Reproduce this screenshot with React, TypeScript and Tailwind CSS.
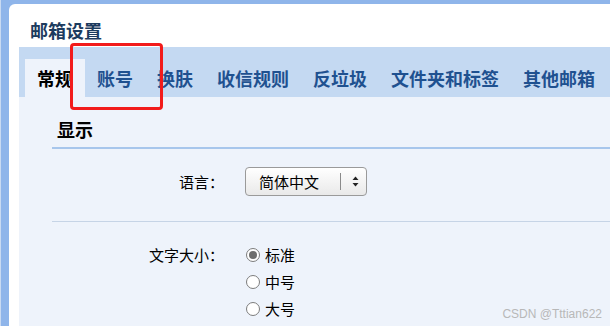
import React from "react";

const tabs = ["常规", "账号", "换肤", "收信规则", "反垃圾", "文件夹和标签", "其他邮箱"];

function Radio({ label, checked }: { label: string; checked?: boolean }) {
  return (
    <label className="flex h-[27px] items-center">
      <span className="flex h-[14px] w-[14px] items-center justify-center rounded-full border border-[#7c7c7c] bg-white">
        {checked && <span className="h-[8px] w-[8px] rounded-full bg-[#6e6e6e]" />}
      </span>
      <span className="ml-[5px] text-[15px] leading-[20px] text-black">{label}</span>
    </label>
  );
}

export default function App() {
  return (
    <div className="relative h-[326px] w-[610px] overflow-hidden border-l border-[#c9daf2] bg-[#8fb5ea] pl-[8px] pt-[4px] font-['Noto_Sans_CJK_SC',sans-serif]">
      <div className="flex h-full flex-col rounded-tl-[6px] bg-white pl-[10px]">
        {/* title */}
        <h1 className="ml-[11px] h-[43px] pt-[14px] text-[18px] font-bold leading-[24px] text-[#1c3b5e]">
          邮箱设置
        </h1>

        {/* tab bar */}
        <div className="flex h-[50px] items-end bg-[#c4d9f2] pl-[6px]">
          {tabs.map((t, i) => (
            <div
              key={t}
              className={`flex h-[38px] items-center px-3 text-[18px] font-bold leading-[24px] ${
                i === 0 ? "bg-[#eef3fb] text-black" : "text-[#1f5190]"
              }`}
            >
              {t}
            </div>
          ))}
        </div>

        {/* content */}
        <div className="flex-1 bg-[#eef3fb] pl-[33px]">
          <h2 className="border-b-2 border-[#a7c6ec] pb-[6px] pl-[5px] pt-[20px] text-[18px] font-bold leading-[24px] text-black">
            显示
          </h2>

          <div className="mt-[18px] flex h-[29px] items-center">
            <div className="w-[172px] text-right text-[15px] leading-[20px] text-black">语言：</div>
            <div className="ml-[21px] flex h-[29px] w-[122px] items-center rounded-[4px] border border-[#9a9a9a] bg-gradient-to-b from-white to-[#e9e9e9] pl-[13px]">
              <span className="w-[60px] text-[15px] leading-[20px] text-black">简体中文</span>
              <span className="ml-[21px] h-[17px] w-px bg-[#8a8a8a]" />
              <svg className="ml-[11px]" width="7" height="11" viewBox="0 0 7 11">
                <path d="M3.5 0.5 L6.5 4 L0.5 4 Z" fill="#222" />
                <path d="M3.5 10.5 L6.5 7 L0.5 7 Z" fill="#222" />
              </svg>
            </div>
          </div>

          <div className="mt-[25px] border-t border-[#c6d4e6]" />

          <div className="mt-[19px] flex items-start">
            <div className="flex h-[27px] w-[172px] items-center justify-end text-[15px] leading-[20px] text-black">
              文字大小：
            </div>
            <div className="ml-[22px] flex flex-col">
              <Radio label="标准" checked />
              <Radio label="中号" />
              <Radio label="大号" />
            </div>
          </div>
        </div>
      </div>

      {/* annotation box */}
      <div className="absolute left-[69px] top-[43px] h-[67px] w-[93px] rounded-[4px] border-[3px] border-[#f21b1b]" />

      <div className="absolute bottom-[5px] right-[8px] font-['Liberation_Sans',sans-serif] text-[12px] leading-[14px] text-[#b8b8b8]">
        CSDN @Tttian622
      </div>
    </div>
  );
}
